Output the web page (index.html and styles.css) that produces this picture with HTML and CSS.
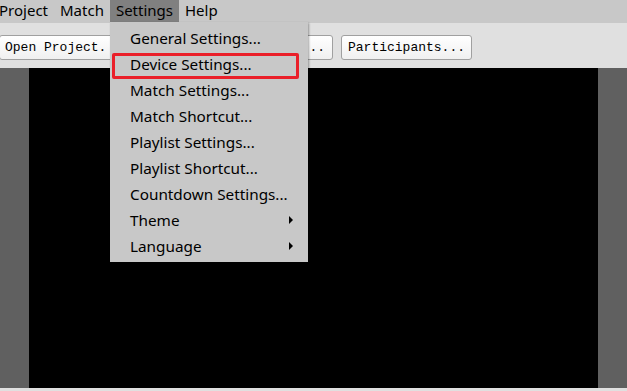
FILE: index.html
```html
<!DOCTYPE html>
<html>
<head>
<meta charset="utf-8">
<link rel="stylesheet" href="styles.css">
</head>
<body>
<div class="menubar">
  <div class="mitem first">Project</div>
  <div class="mitem">Match</div>
  <div class="mitem active">Settings</div>
  <div class="mitem">Help</div>
</div>
<div class="toolbar">
  <button class="btn b1">Open Project.</button>
  <button class="btn b2">...</button>
  <button class="btn">Participants...</button>
</div>
<div class="stage">
  <div class="side"></div>
  <div class="screen"></div>
  <div class="side"></div>
</div>
<div class="footer"></div>

<div class="dropdown">
  <div class="ditem">General Settings...</div>
  <div class="ditem">Device Settings...</div>
  <div class="ditem">Match Settings...</div>
  <div class="ditem">Match Shortcut...</div>
  <div class="ditem">Playlist Settings...</div>
  <div class="ditem">Playlist Shortcut...</div>
  <div class="ditem">Countdown Settings...</div>
  <div class="ditem sub">Theme<span class="arrow"></span></div>
  <div class="ditem sub">Language<span class="arrow"></span></div>
</div>
<div class="highlight-box"></div>
</body>
</html>
```
FILE: styles.css
```css
* { box-sizing: border-box; }
html, body {
  margin: 0;
  padding: 0;
  width: 627px;
  height: 391px;
  overflow: hidden;
  background: #e0e0e0;
  font-family: "Noto Sans", "Open Sans", sans-serif;
}
.menubar {
  height: 23px;
  background: #c8c8c8;
  display: flex;
  align-items: stretch;
}
.mitem {
  font-size: 15px;
  color: #000;
  padding: 0 6px;
  height: 22px;
  line-height: 21px;
}
.mitem.first { margin-left: -7px; }
.mitem.active { background: #808080; }
.toolbar {
  height: 45px;
  background: #e0e0e0;
  display: flex;
  align-items: flex-start;
  padding-top: 12px;
  gap: 8px;
}
.btn {
  height: 25px;
  margin: 0;
  padding: 0 6px;
  border: 1px solid #a0a0a0;
  border-radius: 3px;
  background: linear-gradient(#ffffff, #f0f0f0);
  font-family: "Liberation Mono", monospace;
  font-size: 13px;
  color: #000;
  white-space: nowrap;
}
.b1 { margin-left: -1px; width: 130px; text-align: left; padding-left: 5px; }
.b2 { width: 196px; text-align: right; padding-right: 7px; }
.stage {
  height: 320px;
  display: flex;
}
.side { width: 29px; background: #606060; }
.screen { flex: 1; background: #000; }
.footer { height: 3px; background: #e0e0e0; }
.dropdown {
  position: absolute;
  left: 110px;
  top: 22px;
  width: 198px;
  height: 240px;
  background: #c8c8c8;
  padding-top: 3px;
  box-shadow: 1px 1px 2px rgba(0,0,0,0.35);
}
.ditem {
  height: 26px;
  line-height: 26px;
  padding-left: 20px;
  font-size: 15.3px;
  color: #000;
  position: relative;
}
.arrow {
  position: absolute;
  left: 179px;
  top: 9px;
  width: 0;
  height: 0;
  border-top: 4px solid transparent;
  border-bottom: 4px solid transparent;
  border-left: 4px solid #000;
}
.highlight-box {
  position: absolute;
  left: 112px;
  top: 53px;
  width: 187px;
  height: 26px;
  border: 3px solid #ea1f29;
  border-radius: 2px;
}
```
